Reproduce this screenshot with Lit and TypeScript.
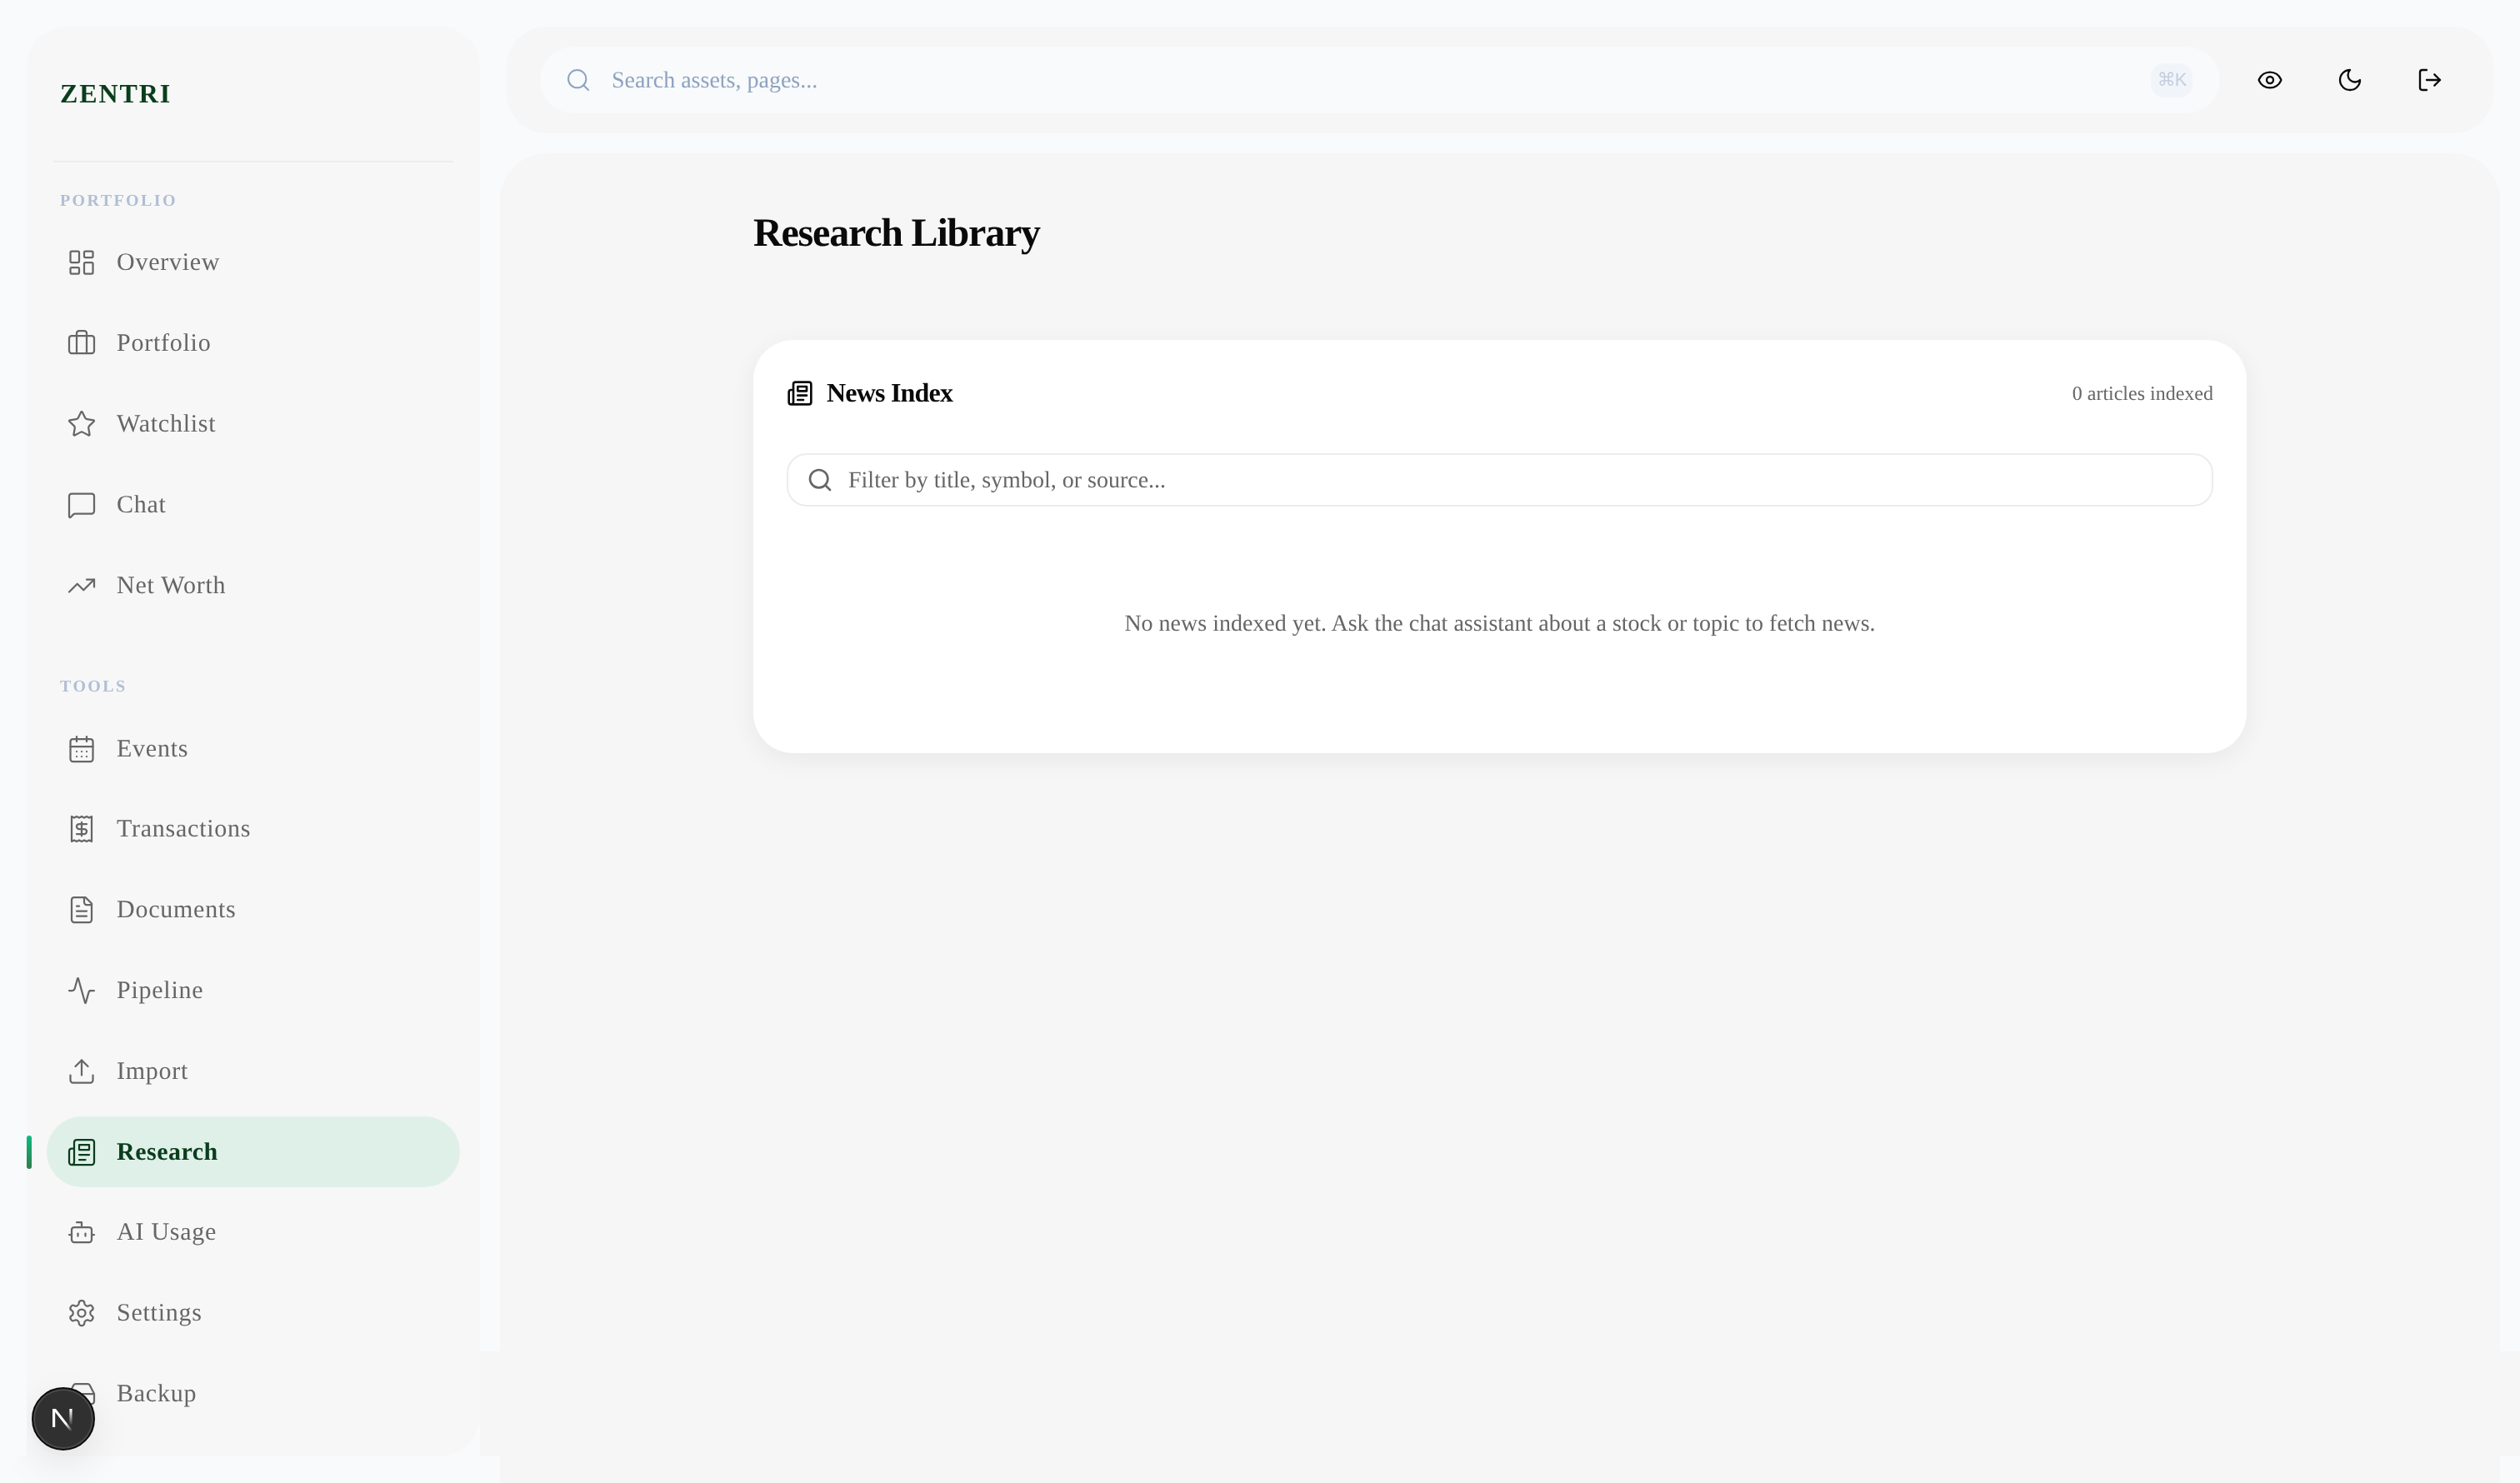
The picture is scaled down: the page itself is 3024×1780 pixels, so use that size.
import { LitElement, html, css, svg } from "lit";
import { customElement } from "lit/decorators.js";

const ICONS: Record<string, unknown> = {
  overview: svg`<rect x="3" y="3" width="7" height="9" rx="1"/><rect x="14" y="3" width="7" height="5" rx="1"/><rect x="14" y="12" width="7" height="9" rx="1"/><rect x="3" y="16" width="7" height="5" rx="1"/>`,
  portfolio: svg`<path d="M16 20V4a2 2 0 0 0-2-2h-4a2 2 0 0 0-2 2v16"/><rect x="2" y="6" width="20" height="14" rx="2"/>`,
  star: svg`<path d="M11.525 2.295a.53.53 0 0 1 .95 0l2.31 4.679a2.123 2.123 0 0 0 1.595 1.16l5.166.756a.53.53 0 0 1 .294.904l-3.736 3.638a2.123 2.123 0 0 0-.611 1.878l.882 5.14a.53.53 0 0 1-.771.56l-4.618-2.428a2.122 2.122 0 0 0-1.973 0L6.396 21.01a.53.53 0 0 1-.77-.56l.881-5.139a2.122 2.122 0 0 0-.611-1.879L2.16 9.795a.53.53 0 0 1 .294-.906l5.165-.755a2.122 2.122 0 0 0 1.597-1.16z"/>`,
  chat: svg`<path d="M22 17a2 2 0 0 1-2 2H6.828a2 2 0 0 0-1.414.586l-2.202 2.202A.71.71 0 0 1 2 21.286V5a2 2 0 0 1 2-2h16a2 2 0 0 1 2 2z"/>`,
  trend: svg`<path d="M16 7h6v6"/><path d="m22 7-8.5 8.5-5-5L2 17"/>`,
  calendar: svg`<path d="M8 2v4"/><path d="M16 2v4"/><rect x="3" y="4" width="18" height="18" rx="2"/><path d="M3 10h18"/><path d="M8 14h.01"/><path d="M12 14h.01"/><path d="M16 14h.01"/><path d="M8 18h.01"/><path d="M12 18h.01"/><path d="M16 18h.01"/>`,
  receipt: svg`<path d="M4 2v20l2-1 2 1 2-1 2 1 2-1 2 1 2-1 2 1V2l-2 1-2-1-2 1-2-1-2 1-2-1-2 1Z"/><path d="M16 8h-6a2 2 0 1 0 0 4h4a2 2 0 1 1 0 4H8"/><path d="M12 17.5v-11"/>`,
  file: svg`<path d="M15 2H6a2 2 0 0 0-2 2v16a2 2 0 0 0 2 2h12a2 2 0 0 0 2-2V7Z"/><path d="M14 2v4a2 2 0 0 0 2 2h4"/><path d="M10 9H8"/><path d="M16 13H8"/><path d="M16 17H8"/>`,
  activity: svg`<path d="M22 12h-2.48a2 2 0 0 0-1.93 1.46l-2.35 8.36a.25.25 0 0 1-.48 0L9.24 2.18a.25.25 0 0 0-.48 0l-2.35 8.36A2 2 0 0 1 4.49 12H2"/>`,
  upload: svg`<path d="M21 15v4a2 2 0 0 1-2 2H5a2 2 0 0 1-2-2v-4"/><polyline points="17 8 12 3 7 8"/><line x1="12" y1="3" x2="12" y2="15"/>`,
  news: svg`<path d="M4 22h16a2 2 0 0 0 2-2V4a2 2 0 0 0-2-2H8a2 2 0 0 0-2 2v16a2 2 0 0 1-2 2Zm0 0a2 2 0 0 1-2-2v-9c0-1.1.9-2 2-2h2"/><path d="M18 14h-8"/><path d="M15 18h-5"/><path d="M10 6h8v4h-8V6Z"/>`,
  bot: svg`<path d="M12 8V4H8"/><rect x="4" y="8" width="16" height="12" rx="2"/><path d="M2 14h2"/><path d="M20 14h2"/><path d="M15 13v2"/><path d="M9 13v2"/>`,
  settings: svg`<path d="M12.22 2h-.44a2 2 0 0 0-2 2v.18a2 2 0 0 1-1 1.73l-.43.25a2 2 0 0 1-2 0l-.15-.08a2 2 0 0 0-2.73.73l-.22.38a2 2 0 0 0 .73 2.73l.15.1a2 2 0 0 1 1 1.72v.51a2 2 0 0 1-1 1.74l-.15.09a2 2 0 0 0-.73 2.73l.22.38a2 2 0 0 0 2.73.73l.15-.08a2 2 0 0 1 2 0l.43.25a2 2 0 0 1 1 1.73V20a2 2 0 0 0 2 2h.44a2 2 0 0 0 2-2v-.18a2 2 0 0 1 1-1.73l.43-.25a2 2 0 0 1 2 0l.15.08a2 2 0 0 0 2.73-.73l.22-.39a2 2 0 0 0-.73-2.73l-.15-.08a2 2 0 0 1-1-1.74v-.5a2 2 0 0 1 1-1.74l.15-.09a2 2 0 0 0 .73-2.73l-.22-.38a2 2 0 0 0-2.73-.73l-.15.08a2 2 0 0 1-2 0l-.43-.25a2 2 0 0 1-1-1.73V4a2 2 0 0 0-2-2z"/><circle cx="12" cy="12" r="3"/>`,
  drive: svg`<line x1="22" y1="12" x2="2" y2="12"/><path d="M5.45 5.11 2 12v6a2 2 0 0 0 2 2h16a2 2 0 0 0 2-2v-6l-3.45-6.89A2 2 0 0 0 16.76 4H7.24a2 2 0 0 0-1.79 1.11z"/><line x1="6" y1="16" x2="6.01" y2="16"/><line x1="10" y1="16" x2="10.01" y2="16"/>`,
  search: svg`<path d="m21 21-4.34-4.34"/><circle cx="11" cy="11" r="8"/>`,
  eye: svg`<path d="M2.062 12.348a1 1 0 0 1 0-.696 10.75 10.75 0 0 1 19.876 0 1 1 0 0 1 0 .696 10.75 10.75 0 0 1-19.876 0"/><circle cx="12" cy="12" r="3"/>`,
  moon: svg`<path d="M12 3a6 6 0 0 0 9 9 9 9 0 1 1-9-9Z"/>`,
  logout: svg`<path d="M9 21H5a2 2 0 0 1-2-2V5a2 2 0 0 1 2-2h4"/><polyline points="16 17 21 12 16 7"/><line x1="21" y1="12" x2="9" y2="12"/>`,
};

const icon = (name: string, cls = "") =>
  html`<svg class="ic ${cls}" viewBox="0 0 24 24" fill="none" stroke="currentColor" stroke-linecap="round" stroke-linejoin="round">${ICONS[name]}</svg>`;

const PORTFOLIO = [
  ["overview", "Overview"],
  ["portfolio", "Portfolio"],
  ["star", "Watchlist"],
  ["chat", "Chat"],
  ["trend", "Net Worth"],
];
const TOOLS = [
  ["calendar", "Events"],
  ["receipt", "Transactions"],
  ["file", "Documents"],
  ["activity", "Pipeline"],
  ["upload", "Import"],
  ["news", "Research"],
  ["bot", "AI Usage"],
  ["settings", "Settings"],
  ["drive", "Backup"],
];

@customElement("app-root")
export class AppRoot extends LitElement {
  static styles = css`
    :host {
      display: block;
      position: relative;
      width: 3024px;
      height: 1780px;
      overflow: hidden;
      background: #f8fafc;
      font-family: "Liberation Serif", "Times New Roman", serif;
      color: #0a0a0a;
      text-rendering: geometricPrecision;
    }
    .shell {
      display: flex;
      height: 100%;
      will-change: transform;
    }
    .sidebar {
      flex: none;
      box-sizing: border-box;
      width: 544px;
      height: 1716px;
      margin: 32px 24px 0 32px;
      background: #f7f7f7;
      border-radius: 48px;
      overflow: hidden;
      position: relative;
    }
    .brand {
      box-sizing: border-box;
      height: 161px;
      padding: 57px 0 0 40px;
      font-size: 32px;
      line-height: 46px;
      font-weight: 700;
      letter-spacing: 1.9px;
      color: #0a3d1c;
    }
    .divider {
      height: 2px;
      margin: 0 32px;
      background: #e9eef3;
    }
    nav {
      padding: 0 24px;
    }
    .label {
      height: 28px;
      line-height: 28px;
      padding-left: 16px;
      font-size: 20px;
      font-weight: 700;
      letter-spacing: 2.4px;
      color: #b0bfd4;
      margin: 32px 0 18px;
    }
    .label.second {
      margin-top: 65px;
      margin-bottom: 18.3px;
    }
    .rows {
      display: flex;
      flex-direction: column;
      gap: 12px;
    }
    .row {
      display: flex;
      align-items: center;
      gap: 24px;
      height: 84.8px;
      padding-left: 24px;
      border-radius: 42.4px;
      font-size: 30px;
      letter-spacing: 0.75px;
      color: #666;
    }
    .row .ic {
      width: 36px;
      height: 36px;
      stroke-width: 1.5;
    }
    .row.active {
      background: #dff0e9;
      color: #0a3d1c;
      font-weight: 700;
      letter-spacing: 0.5px;
    }
    .bar {
      position: absolute;
      left: 0;
      top: 1331px;
      width: 6px;
      height: 40px;
      border-radius: 3px;
      background: linear-gradient(180deg, #10b981, #2e7d4a);
    }
    .ic {
      flex: none;
      display: block;
    }
    .column {
      flex: 1;
      min-width: 0;
      display: flex;
      flex-direction: column;
    }
    .topbar {
      flex: none;
      box-sizing: border-box;
      height: 128px;
      margin: 32px 32px 24px 8px;
      padding: 0 60px 0 40px;
      border-radius: 48px;
      background: #f6f6f6;
      display: flex;
      align-items: center;
    }
    .search {
      flex: 1;
      box-sizing: border-box;
      height: 80px;
      padding: 0 33px 0 30px;
      border-radius: 40px;
      background: #f8fafc;
      display: flex;
      align-items: center;
      gap: 24px;
      font-size: 28px;
      color: #8fa3bf;
    }
    .search .ic {
      width: 32px;
      height: 32px;
      stroke-width: 1.5;
    }
    .search .text {
      flex: 1;
      padding-top: 2px;
    }
    kbd {
      box-sizing: border-box;
      width: 50px;
      height: 41px;
      border-radius: 16px;
      background: #f1f5f9;
      color: #c4cfde;
      display: flex;
      align-items: center;
      justify-content: center;
      font-family: "Liberation Sans", "DejaVu Sans", sans-serif;
      font-size: 22px;
      letter-spacing: -1px;
    }
    .actions {
      display: flex;
      align-items: center;
      gap: 64px;
      margin-left: 44px;
    }
    .actions .ic {
      width: 32px;
      height: 32px;
      stroke-width: 1.75;
      color: #0a0a0a;
    }
    main {
      flex: 1;
      margin-right: 24px;
      border-radius: 56px 56px 0 0;
      background: #f6f6f6;
      padding-top: 68px;
    }
    .content {
      width: 1792px;
      margin: 0 auto;
    }
    h1 {
      margin: 0 0 100px;
      font-size: 48px;
      line-height: 56px;
      font-weight: 700;
      letter-spacing: -1.2px;
      color: #0a0a0a;
    }
    .card {
      box-sizing: border-box;
      height: 496px;
      padding: 40px;
      border-radius: 48px;
      background: #fff;
      box-shadow: 0 8px 32px rgba(0, 0, 0, 0.06);
    }
    .card-head {
      height: 48px;
      display: flex;
      align-items: center;
      justify-content: space-between;
    }
    .card-title {
      display: flex;
      align-items: center;
      gap: 16px;
      font-size: 32px;
      font-weight: 700;
      letter-spacing: -0.8px;
    }
    .card-title .ic {
      width: 32px;
      height: 32px;
      stroke-width: 2;
    }
    .card-title span {
      margin-top: -2px;
    }
    .count {
      font-size: 24px;
      color: #666;
      padding-top: 2px;
    }
    .filter {
      box-sizing: border-box;
      height: 64px;
      margin-top: 48px;
      padding: 0 18px 0 22px;
      border: 2px solid #ececec;
      border-radius: 24px;
      display: flex;
      align-items: center;
      gap: 18px;
      font-size: 28px;
      color: #666;
    }
    .filter .ic {
      width: 32px;
      height: 32px;
      stroke-width: 2;
    }
    .filter span {
      padding-top: 2px;
    }
    .empty {
      margin-top: 121px;
      line-height: 40px;
      text-align: center;
      font-size: 28px;
      color: #666;
    }
    .band {
      position: absolute;
      top: 1622px;
      height: 126px;
    }
    .band.gap {
      left: 576px;
      width: 24px;
      background: #f6f6f6;
    }
    .band.edge {
      left: 3000px;
      width: 24px;
      background: #f6f6f6;
    }
    .band.left {
      left: 0;
      width: 32px;
      background: #f8fafc;
    }
    .next {
      position: absolute;
      left: 38px;
      top: 1665px;
      width: 76px;
      height: 76px;
      box-sizing: border-box;
      border-radius: 50%;
      background: #303030;
      border: 2px solid #0c0c0c;
      box-shadow: inset 0 0 0 2px #4a4a4a, 0 16px 48px rgba(0, 0, 0, 0.09);
    }
    .next svg {
      display: block;
      margin: 20px 0 0 20px;
      width: 32px;
      height: 32px;
    }
  `;

  private rows(items: string[][]) {
    return html`<div class="rows">
      ${items.map(
        ([ic, label]) => html`<div class="row ${label === "Research" ? "active" : ""}">
          ${icon(ic)}<span>${label}</span>
        </div>`
      )}
    </div>`;
  }

  render() {
    return html`
      <div class="shell">
        <aside class="sidebar">
          <div class="brand">ZENTRI</div>
          <div class="divider"></div>
          <nav>
            <div class="label">PORTFOLIO</div>
            ${this.rows(PORTFOLIO)}
            <div class="label second">TOOLS</div>
            ${this.rows(TOOLS)}
          </nav>
          <div class="bar"></div>
        </aside>
        <div class="column">
          <header class="topbar">
            <div class="search">
              ${icon("search")}
              <span class="text">Search assets, pages...</span>
              <kbd>⌘K</kbd>
            </div>
            <div class="actions">${icon("eye")}${icon("moon")}${icon("logout")}</div>
          </header>
          <main>
            <div class="content">
              <h1>Research Library</h1>
              <section class="card">
                <div class="card-head">
                  <div class="card-title">${icon("news")}<span>News Index</span></div>
                  <div class="count">0 articles indexed</div>
                </div>
                <div class="filter">${icon("search")}<span>Filter by title, symbol, or source...</span></div>
                <div class="empty">No news indexed yet. Ask the chat assistant about a stock or topic to fetch news.</div>
              </section>
            </div>
          </main>
        </div>
      </div>
      <div class="next">
        <svg viewBox="0 0 32 32" fill="none">
          <defs>
            <linearGradient id="nd" x1="10" y1="10" x2="27" y2="30" gradientUnits="userSpaceOnUse">
              <stop offset="0.55" stop-color="#fff"></stop>
              <stop offset="1" stop-color="#fff" stop-opacity="0"></stop>
            </linearGradient>
            <linearGradient id="nr" x1="25" y1="5" x2="25" y2="24" gradientUnits="userSpaceOnUse">
              <stop offset="0" stop-color="#fff"></stop>
              <stop offset="1" stop-color="#fff" stop-opacity="0"></stop>
            </linearGradient>
          </defs>
          <path d="M3 4h3.2v22H3z" fill="#fff"></path>
          <path d="M3 4h4L28 31h-3.6z" fill="url(#nd)"></path>
          <path d="M23.4 4h3.2v20h-3.2z" fill="url(#nr)"></path>
        </svg>
      </div>
      <div class="band gap"></div>
      <div class="band edge"></div>
      <div class="band left"></div>
    `;
  }
}
